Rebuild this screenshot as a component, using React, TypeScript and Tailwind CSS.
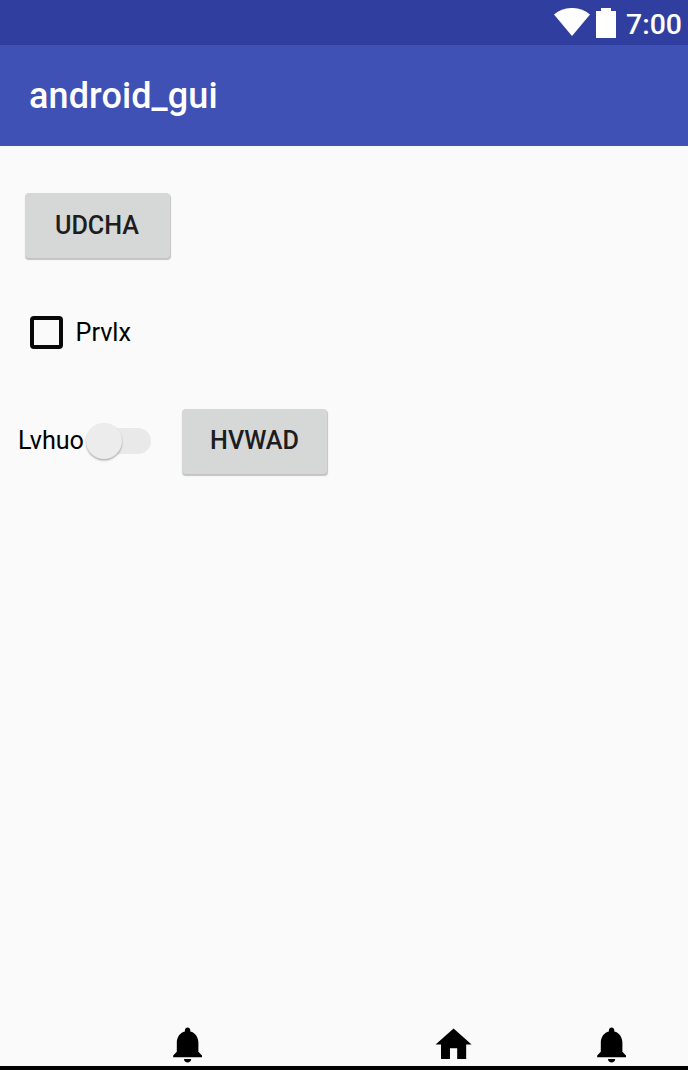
import React from "react";

function Bell({ className = "" }: { className?: string }) {
  return (
    <svg viewBox="0 0 24 24" className={`h-[43.2px] w-[43.2px] shrink-0 ${className}`} fill="#000">
      <path d="M12 22c1.1 0 2-.9 2-2h-4c0 1.1.89 2 2 2zm6-6v-5c0-3.07-1.64-5.64-4.5-6.32V4c0-.83-.67-1.5-1.5-1.5s-1.5.67-1.5 1.5v.68C7.63 5.36 6 7.92 6 11v5l-2 2v1h16v-1l-2-2z" />
    </svg>
  );
}

function RaisedButton({ children, className = "" }: { children: React.ReactNode; className?: string }) {
  return (
    <button
      className={`flex h-[65px] w-[145px] items-center justify-center rounded-[4px] bg-[#d6d8d7] pb-[1px] text-[25.2px] font-medium leading-[29px] text-[#1d1d1d] shadow-[0.5px_1.5px_1px_0px_rgba(0,0,0,0.22)] ${className}`}
    >
      {children}
    </button>
  );
}

export default function App() {
  return (
    <div className="flex h-[1070px] w-[688px] flex-col overflow-hidden bg-[#fafafa] font-['Roboto',sans-serif] text-black">
      <div className="flex h-[45px] shrink-0 items-start justify-end bg-[#303f9f] pr-[6px] text-white">
        <svg viewBox="0 0 36 28" className="mt-[8px] h-[28px] w-[36px]" fill="#fff">
          <path d="M0 6.5C10-2.2 26-2.2 36 6.5L18 28z" />
        </svg>
        <svg viewBox="0 0 20 30" className="ml-[6.5px] mt-[8px] h-[30px] w-[20px]" fill="#fff">
          <path d="M5 0h10v3h5v27H0V3h5z" />
        </svg>
        <span className="ml-[10px] mt-[9px] text-[28.4px] font-medium leading-[32px]">7:00</span>
      </div>
      <header className="flex h-[101px] shrink-0 items-center bg-[#3f51b5] pl-[29px] text-white">
        <h1 className="text-[36px] font-medium leading-none tracking-[0.1px]">android_gui</h1>
      </header>
      <main className="flex flex-1 flex-col items-start pt-[47px]">
        <RaisedButton className="ml-[24.5px]">UDCHA</RaisedButton>
        <label className="ml-[30px] mt-[58.5px] flex h-[32px] items-center">
          <span className="h-[33px] w-[33px] rounded-[4px] border-[4px] border-[#080808]" />
          <span className="ml-[12.5px] text-[25.2px] leading-[32px]">Prvlx</span>
        </label>
        <div className="mt-[60px] flex h-[65px] items-center">
          <span className="ml-[18px] w-[67.5px] text-[25.2px] leading-[30px] tracking-[-0.1px]">Lvhuo</span>
          <span className="flex h-[26px] w-[65px] items-center rounded-full bg-[linear-gradient(to_right,transparent_18px,#e9e9e9_18px)]">
            <span className="h-[36px] w-[36px] shrink-0 rounded-full bg-[#ececec] shadow-[0_1.5px_2px_rgba(0,0,0,0.3)]" />
          </span>
          <RaisedButton className="ml-[31.5px]">HVWAD</RaisedButton>
        </div>
      </main>
      <nav className="flex h-[43px] shrink-0 items-start">
        <Bell className="ml-[165.8px]" />
        <svg viewBox="0 0 24 24" className="ml-[223px] h-[43.2px] w-[43.2px] shrink-0" fill="#000">
          <path d="M10 20v-6h4v6h5v-8h3L12 3 2 12h3v8z" />
        </svg>
        <Bell className="ml-[115px]" />
      </nav>
      <div className="h-[4.5px] shrink-0 bg-black" />
    </div>
  );
}
